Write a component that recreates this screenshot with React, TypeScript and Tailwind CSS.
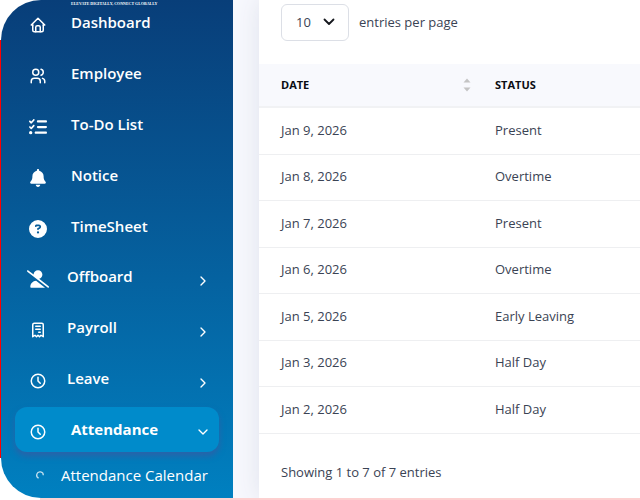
import { FaBell, FaCircleQuestion, FaListCheck, FaUserSlash } from 'react-icons/fa6';
import {
  TbChevronDown,
  TbChevronRight,
  TbClock,
  TbHome,
  TbReceipt,
  TbUsers,
} from 'react-icons/tb';

const links = [
  { label: 'Dashboard', icon: TbHome },
  { label: 'Employee', icon: TbUsers },
  { label: 'To-Do List', icon: FaListCheck },
  { label: 'Notice', icon: FaBell },
  { label: 'TimeSheet', icon: FaCircleQuestion },
];

const groups = [
  { label: 'Offboard', icon: FaUserSlash, iconClass: 'w-[22px] h-[18px]' },
  { label: 'Payroll', icon: TbReceipt, iconClass: 'size-[18px]' },
  { label: 'Leave', icon: TbClock, iconClass: 'size-[18px]' },
];

const records = [
  { date: 'Jan 9, 2026', status: 'Present' },
  { date: 'Jan 8, 2026', status: 'Overtime' },
  { date: 'Jan 7, 2026', status: 'Present' },
  { date: 'Jan 6, 2026', status: 'Overtime' },
  { date: 'Jan 5, 2026', status: 'Early Leaving' },
  { date: 'Jan 3, 2026', status: 'Half Day' },
  { date: 'Jan 2, 2026', status: 'Half Day' },
];

function Sidebar() {
  return (
    <aside className="w-[232px] shrink-0 overflow-hidden rounded-l-[40px] bg-linear-to-b from-[#083e79] to-[#0080c0] text-[15px] font-semibold text-white">
      <p className="pl-[70px] font-['Liberation_Serif',serif] text-[4px] leading-[8px] font-bold whitespace-nowrap">
        ELEVATE DIGITALLY, CONNECT GLOBALLY
      </p>

      <nav className="px-3.5 pb-2">
        <ul className="-mt-2 space-y-1.5">
          {links.map((link) => (
            <li key={link.label}>
              <a href="#" className="flex h-[45px] items-center pl-3.5">
                <span className="flex w-[18px] justify-center pt-1">
                  <link.icon className="size-[18px]" />
                </span>
                <span className="pl-6">{link.label}</span>
              </a>
            </li>
          ))}
        </ul>

        <ul className="mt-[5px] space-y-1.5">
          {groups.map((group) => (
            <li key={group.label}>
              <a href="#" className="flex h-[45px] items-center pl-3.5 pr-2">
                <span className="flex w-[18px] justify-center pt-1">
                  <group.icon className={`shrink-0 ${group.iconClass}`} />
                </span>
                <span className="flex-1 pl-5">{group.label}</span>
                <TbChevronRight className="mt-2 size-4" />
              </a>
            </li>
          ))}
          <li>
            <a
              href="#"
              className="flex h-[45px] items-center rounded-xl bg-[#008bcb] pl-3.5 pr-2 font-bold shadow-[0_4px_6px_#2b62a8]"
            >
              <span className="flex w-[18px] justify-center pt-1">
                <TbClock className="size-[18px]" />
              </span>
              <span className="flex-1 pl-6">Attendance</span>
              <TbChevronDown className="mt-1 size-4" />
            </a>
            <a href="#" className="mt-3 flex items-center pl-5 font-medium">
              <svg viewBox="0 0 10 10" className="size-2.5" fill="none" stroke="currentColor" strokeWidth="1.3">
                <path d="M3.6 8.1A3.3 3.3 0 1 1 8.3 5.2" opacity="0.75" />
              </svg>
              <span className="pl-4 whitespace-nowrap">Attendance Calendar</span>
            </a>
          </li>
        </ul>
      </nav>
    </aside>
  );
}

function SortIcon() {
  return (
    <svg viewBox="0 0 8 14" className="h-3.5 w-2 fill-[#c4c4c4]">
      <path d="M4 0.5 7.5 4.5H0.5Z" />
      <path d="M4 13.5 7.5 9.5H0.5Z" />
    </svg>
  );
}

function AttendanceTable() {
  return (
    <section className="min-w-0 flex-1 bg-white text-[13px] text-[#3a4354] shadow-[0_0_24px_#dfe2ec]">
      <div className="flex items-center px-[22px] pt-1 pb-[23px]">
        <div className="relative">
          <select
            id="page-size"
            defaultValue="10"
            className="h-[37px] w-[68px] appearance-none rounded-md border border-[#dcdfe6] bg-white pl-3.5"
          >
            <option>10</option>
            <option>25</option>
            <option>50</option>
          </select>
          <svg
            viewBox="0 0 12 8"
            className="pointer-events-none absolute top-3.5 right-3.5 h-2 w-3"
            fill="none"
            stroke="#15181d"
            strokeWidth="1.8"
            strokeLinecap="round"
            strokeLinejoin="round"
          >
            <path d="M1.5 1.5 6 6l4.5-4.5" />
          </svg>
        </div>
        <label htmlFor="page-size" className="pl-2.5">
          entries per page
        </label>
      </div>

      <table className="w-full table-fixed text-left">
        <thead className="bg-[#f8f9fd] text-[11px] text-[#0b0d12]">
          <tr className="h-[43px] border-b-2 border-[#f1f2f4]">
            <th className="w-[214px] pl-[22px] pr-0.5 font-bold">
              <span className="flex items-center justify-between">
                DATE
                <SortIcon />
              </span>
            </th>
            <th className="pl-[22px] font-bold">STATUS</th>
          </tr>
        </thead>
        <tbody>
          {records.map((record) => (
            <tr key={record.date} className="border-b border-[#eeeff1] odd:h-[47px] even:h-[46px]">
              <td className="pl-[22px]">{record.date}</td>
              <td className="pl-[22px]">{record.status}</td>
            </tr>
          ))}
        </tbody>
      </table>

      <p className="px-[22px] pt-7 leading-5">Showing 1 to 7 of 7 entries</p>
    </section>
  );
}

export default function App() {
  return (
    <div className="flex min-h-screen flex-col bg-white font-['Open_Sans',sans-serif]">
      <div className="flex flex-1">
        <div className="my-10 w-px shrink-0 bg-[#ff0000]" />
        <Sidebar />
        <main className="flex min-w-0 flex-1 overflow-hidden bg-[#f7f8fd] pl-[26px]">
          <AttendanceTable />
        </main>
      </div>
      <div className="ml-10 h-0.5 bg-[#fdd0d0]" />
    </div>
  );
}
